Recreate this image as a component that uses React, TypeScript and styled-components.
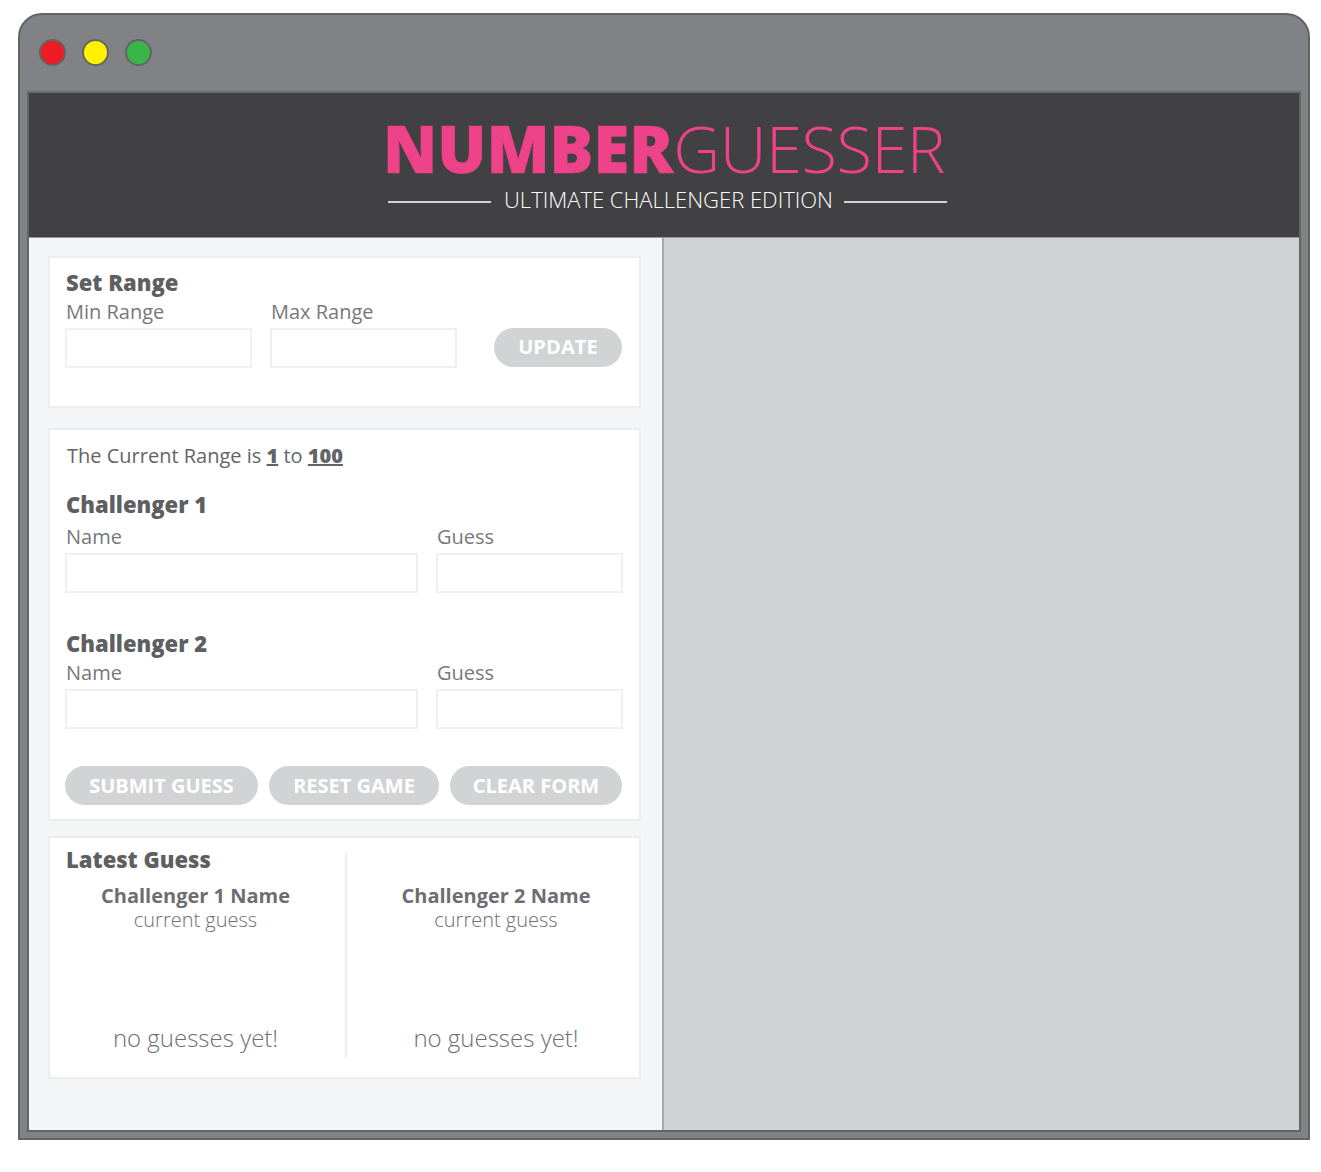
import styled, { createGlobalStyle } from 'styled-components';

const GlobalStyle = createGlobalStyle`
  html, body {
    margin: 0;
    padding: 0;
    background: #ffffff;
  }
  * {
    box-sizing: border-box;
  }
`;

function App() {
  return (
    <>
      <GlobalStyle />
      <Page>
        <BrowserWindow>
          <TitleBar>
            <Dot $color="#ed1c24" />
            <Dot $color="#fff200" />
            <Dot $color="#39b54a" />
          </TitleBar>
          <Viewport>
            <Header>
              <Logo>
                <strong>NUMBER</strong>GUESSER
              </Logo>
              <Edition>
                <Rule />
                <span>ULTIMATE CHALLENGER EDITION</span>
                <Rule />
              </Edition>
            </Header>
            <Main>
              <LeftColumn>
                <Card $height={152}>
                  <CardTitle>Set Range</CardTitle>
                  <RangeRow>
                    <Field $width={187}>
                      <Label>Min Range</Label>
                      <Input />
                    </Field>
                    <Field $width={187}>
                      <Label>Max Range</Label>
                      <Input />
                    </Field>
                    <UpdateButton>UPDATE</UpdateButton>
                  </RangeRow>
                </Card>

                <Card $height={393}>
                  <CurrentRange>
                    The Current Range is <u>1</u> to <u>100</u>
                  </CurrentRange>
                  <Challenger>
                    <CardTitle>Challenger 1</CardTitle>
                    <GuessRow $top={4}>
                      <Field $width={353}>
                        <Label>Name</Label>
                        <Input />
                      </Field>
                      <Field $width={187}>
                        <Label>Guess</Label>
                        <Input />
                      </Field>
                    </GuessRow>
                  </Challenger>
                  <Challenger>
                    <CardTitle>Challenger 2</CardTitle>
                    <GuessRow $top={1}>
                      <Field $width={353}>
                        <Label>Name</Label>
                        <Input />
                      </Field>
                      <Field $width={187}>
                        <Label>Guess</Label>
                        <Input />
                      </Field>
                    </GuessRow>
                  </Challenger>
                  <ButtonRow>
                    <ActionButton $width={193}>SUBMIT GUESS</ActionButton>
                    <ActionButton $width={170}>RESET GAME</ActionButton>
                    <ActionButton $width={172}>CLEAR FORM</ActionButton>
                  </ButtonRow>
                </Card>

                <LatestCard>
                  <LatestColumn>
                    <LatestTitle>Latest Guess</LatestTitle>
                    <PlayerName>Challenger 1 Name</PlayerName>
                    <PlayerGuess>current guess</PlayerGuess>
                    <NoGuesses>no guesses yet!</NoGuesses>
                  </LatestColumn>
                  <LatestColumn $divided>
                    <LatestTitle />
                    <PlayerName>Challenger 2 Name</PlayerName>
                    <PlayerGuess>current guess</PlayerGuess>
                    <NoGuesses>no guesses yet!</NoGuesses>
                  </LatestColumn>
                </LatestCard>
              </LeftColumn>
              <RightColumn />
            </Main>
          </Viewport>
        </BrowserWindow>
      </Page>
    </>
  );
}

export default App;

const Page = styled.div`
  width: 1321px;
  height: 1172px;
  padding: 13px 11px 32px 18px;
  font-family: 'Open Sans', 'Liberation Sans', sans-serif;
  overflow: hidden;
`;

const BrowserWindow = styled.div`
  height: 1127px;
  display: flex;
  flex-direction: column;
  background: #808285;
  border: 2px solid #636466;
  border-radius: 24px 24px 0 0;
  padding: 0 7px 6px;
`;

const TitleBar = styled.div`
  height: 76px;
  flex-shrink: 0;
  display: flex;
  align-items: center;
  gap: 16.4px;
  padding: 0 0 1px 11.5px;
`;

const Dot = styled.span<{ $color: string }>`
  width: 27px;
  height: 27px;
  border-radius: 50%;
  background: ${(props) => props.$color};
  border: 2px solid #636466;
`;

const Viewport = styled.div`
  flex: 1;
  display: flex;
  flex-direction: column;
  border: 2px solid #636466;
  border-top-color: #6d6e71;
  background: #f4f5f7;
  min-height: 0;
`;

const Header = styled.header`
  height: 145px;
  flex-shrink: 0;
  background: #414042;
  border-bottom: 1px solid #939598;
  display: flex;
  flex-direction: column;
  align-items: center;
  padding-top: 17px;
`;

const Logo = styled.h1`
  margin: 0;
  font-size: 65px;
  line-height: 76px;
  font-weight: 300;
  color: #ee4289;
  letter-spacing: -0.5px;

  strong {
    font-weight: 800;
    letter-spacing: 0.1px;
    -webkit-text-stroke: 0.7px #ee4289;
  }
`;

const Edition = styled.div`
  display: flex;
  align-items: center;
  gap: 11px;
  margin-left: 7px;
  color: #ffffff;
  font-size: 22px;
  font-weight: 300;
  line-height: 26px;

  span:nth-child(2) {
    margin-left: 2px;
  }
`;

const Rule = styled.span`
  width: 103px;
  height: 2px;
  margin-top: 5px;
  background: #d1d3d4;
`;

const Main = styled.main`
  flex: 1;
  display: flex;
  min-height: 0;
`;

const LeftColumn = styled.section`
  width: 635px;
  flex-shrink: 0;
  padding: 18px 0 0 19px;
  border-right: 2px solid #a7a9ac;
`;

const RightColumn = styled.section`
  flex: 1;
  background: #d1d3d4;
`;

const Card = styled.div<{ $height: number }>`
  width: 593px;
  height: ${(props) => props.$height}px;
  margin-bottom: 20px;
  padding: 9px 15px 0;
  background: #ffffff;
  border: 2px solid #eceded;
`;

const CardTitle = styled.h2`
  margin: 0 0 0 1px;
  font-size: 22px;
  line-height: 30px;
  font-weight: 800;
  color: #5e5f61;
`;

const RangeRow = styled.div`
  display: flex;
  align-items: flex-end;
  gap: 18px;
  margin-top: 1px;
`;

const Field = styled.label<{ $width: number }>`
  display: block;
  width: ${(props) => props.$width}px;
`;

const Label = styled.span`
  display: block;
  font-size: 20px;
  line-height: 27px;
  height: 30px;
  font-weight: 400;
  color: #77787b;
  padding-left: 1px;
`;

const Input = styled.input`
  display: block;
  width: 100%;
  height: 40px;
  padding: 0 8px;
  background: #ffffff;
  border: 2px solid #eff0f0;
  outline: none;
`;

const PillButton = styled.button`
  height: 39px;
  border: none;
  border-radius: 20px;
  padding: 0;
  background: #d1d3d4;
  color: #ffffff;
  font-family: inherit;
  font-size: 20px;
  font-weight: 700;
`;

const UpdateButton = styled(PillButton)`
  width: 128px;
  margin-left: 19px;
  margin-bottom: 1px;
  padding-bottom: 3px;
  letter-spacing: 0.1px;
`;

const CurrentRange = styled.p`
  margin: 2px 0 18px 2px;
  font-size: 20px;
  line-height: 30px;
  color: #636466;

  u {
    font-weight: 800;
  }
`;

const Challenger = styled.div`
  margin-bottom: 35px;
`;

const GuessRow = styled.div<{ $top: number }>`
  display: flex;
  gap: 18px;
  margin-top: ${(props) => props.$top}px;
`;

const ButtonRow = styled.div`
  display: flex;
  gap: 11px;
  margin-top: 37px;
`;

const ActionButton = styled(PillButton)<{ $width: number }>`
  width: ${(props) => props.$width}px;
`;

const LatestCard = styled.div`
  width: 593px;
  height: 243px;
  margin-top: -5px;
  padding: 15px 0 0 15px;
  display: flex;
  background: #ffffff;
  border: 2px solid #eceded;
`;

const LatestColumn = styled.div<{ $divided?: boolean }>`
  width: ${(props) => (props.$divided ? '293px' : '280px')};
  height: 205px;
  display: flex;
  flex-direction: column;
  padding: ${(props) => (props.$divided ? '0 0 0 7px' : '0 19px 0 0')};
  border-left: ${(props) => (props.$divided ? '2px solid #eceded' : 'none')};
`;

const LatestTitle = styled.h2`
  margin: 0 0 0 1px;
  height: 12px;
  font-size: 22px;
  line-height: 12px;
  font-weight: 800;
  color: #5e5f61;
  text-align: left;
  white-space: nowrap;
`;

const PlayerName = styled.div`
  margin-top: 18px;
  font-size: 20px;
  line-height: 26px;
  font-weight: 700;
  color: #6d6e71;
  text-align: center;
`;

const PlayerGuess = styled.div`
  font-size: 20px;
  line-height: 22px;
  font-weight: 300;
  color: #6d6e71;
  text-align: center;
`;

const NoGuesses = styled.div`
  margin-top: auto;
  margin-bottom: 3px;
  font-size: 24px;
  line-height: 34px;
  font-weight: 300;
  color: #6d6e71;
  text-align: center;
`;
